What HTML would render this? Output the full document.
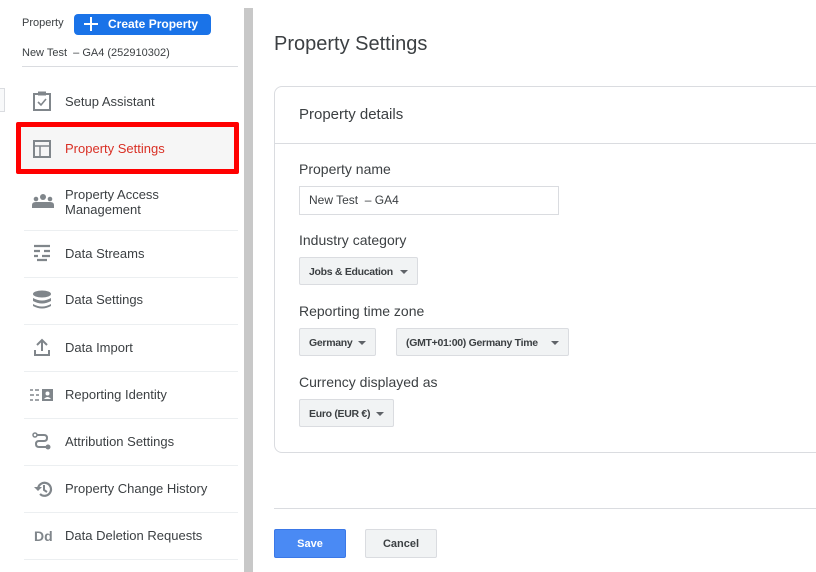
<!DOCTYPE html>
<html><head><style>
*{margin:0;padding:0;box-sizing:border-box}
body{width:816px;height:572px;overflow:hidden;background:#fff;font-family:"Liberation Sans",Arial,sans-serif;position:relative;color:#3c4043}
.a{position:absolute}
.item{position:absolute;left:24px;width:214px;font-size:13px;color:#3c4043}
.div{position:absolute;left:24px;width:214px;height:1px;background:#eceff1}
.ic{position:absolute;left:32px}
.lbl{position:absolute;left:299px;font-size:14px;color:#3c4043}
.dd{position:absolute;height:28px;background:#f1f3f4;border:1px solid #dadce0;border-radius:2px;font-size:10.5px;letter-spacing:-0.3px;font-weight:bold;color:#3c4043;line-height:28px;padding-left:9px}
.dd:after{content:"";position:absolute;right:9px;top:12px;border-left:4px solid transparent;border-right:4px solid transparent;border-top:4px solid #5f6368}
</style></head><body>
<div class="a" style="left:22px;top:17px;font-size:11px;color:#3c4043">Property</div>
<div class="a" style="left:74px;top:14px;width:137px;height:21px;background:#1a73e8;border-radius:4px;color:#fff;font-size:12px;font-weight:bold;line-height:21px;padding-left:34px">Create Property</div>
<div class="a" style="left:84px;top:23px;width:14px;height:2px;background:#fff"></div>
<div class="a" style="left:90px;top:17px;width:2px;height:14px;background:#fff"></div>
<div class="a" style="left:22px;top:47px;font-size:11px;color:#3c4043">New Test &nbsp;– GA4 (252910302)</div>
<div class="a" style="left:22px;top:66px;width:216px;height:1px;background:#dadce0"></div>
<div class="a" style="left:0;top:88px;width:5px;height:24px;border:1px solid #dadce0;border-left:none;background:#f8f9fa"></div>

<svg class="ic" style="top:90px" width="20" height="22" viewBox="0 0 20 22"><rect x="2" y="4" width="16" height="16" fill="none" stroke="#80868b" stroke-width="2"/><rect x="6" y="1.5" width="8" height="4" fill="#80868b"/><path d="M6 12l3 3 5-6" fill="none" stroke="#80868b" stroke-width="1.6"/></svg>
<div class="item" style="top:94px;left:65px">Setup Assistant</div>

<div class="a" style="left:16px;top:122px;width:223px;height:52px;border:5px solid #f00;background:#f6f6f6;border-radius:2px"></div>
<svg class="ic" style="top:139px" width="20" height="20"><rect x="2" y="2" width="16" height="16" fill="none" stroke="#80868b" stroke-width="2"/><path d="M2 7h16M8 7v11" stroke="#80868b" stroke-width="1.5"/></svg>
<div class="item" style="top:141px;left:65px;color:#d93025">Property Settings</div>

<svg class="ic" style="top:193px" width="22" height="16"><circle cx="11" cy="4" r="3" fill="#80868b"/><circle cx="4" cy="6" r="2.3" fill="#80868b"/><circle cx="18" cy="6" r="2.3" fill="#80868b"/><path d="M0 15v-3q0-3 4-3h14q4 0 4 3v3z" fill="#80868b"/></svg>
<div class="item" style="top:187px;left:65px;line-height:15px">Property Access<br>Management</div>
<div class="div" style="top:230px"></div>

<svg class="ic" style="top:244px" width="20" height="18"><path d="M2 2h16M2 7h6M12 7h6M2 12h4M10 12h8M5 16h10" stroke="#80868b" stroke-width="2.2"/></svg>
<div class="item" style="top:246px;left:65px">Data Streams</div>
<div class="div" style="top:277px"></div>

<svg class="ic" style="top:290px" width="20" height="20"><ellipse cx="10" cy="4" rx="9" ry="3.5" fill="#80868b"/><path d="M1 8q9 5 18 0v3q-9 5-18 0zM1 14q9 5 18 0v2q-9 5-18 0z" fill="#80868b"/></svg>
<div class="item" style="top:292px;left:65px">Data Settings</div>
<div class="div" style="top:324px"></div>

<svg class="ic" style="top:337px" width="20" height="20"><path d="M10 14V3M5 8l5-5 5 5M3 13v5h14v-5" fill="none" stroke="#80868b" stroke-width="2"/></svg>
<div class="item" style="top:340px;left:65px">Data Import</div>
<div class="div" style="top:371px"></div>

<svg class="ic" style="top:388px;left:30px" width="24" height="14"><path d="M0 2h3M5 2h4M0 7h4M6 7h3M0 12h3M5 12h4" stroke="#80868b" stroke-width="1.5"/><rect x="12" y="1" width="11" height="12" fill="#80868b"/><circle cx="17.5" cy="5.5" r="2" fill="#fff"/><path d="M14 11q3.5-4 7 0z" fill="#fff"/></svg>
<div class="item" style="top:387px;left:65px">Reporting Identity</div>
<div class="div" style="top:418px"></div>

<svg class="ic" style="top:432px" width="20" height="20"><circle cx="3" cy="3" r="2" fill="none" stroke="#80868b" stroke-width="1.5"/><circle cx="16" cy="15" r="2.5" fill="#80868b"/><path d="M5 3h7q3 0 3 3t-3 3H7q-3 0-3 3t3 3h7" fill="none" stroke="#80868b" stroke-width="2"/></svg>
<div class="item" style="top:434px;left:65px">Attribution Settings</div>
<div class="div" style="top:465px"></div>

<svg class="ic" style="top:479px;left:34px" width="20" height="20"><path d="M4 10a6.5 6.5 0 1 1 2 5" fill="none" stroke="#80868b" stroke-width="2.2"/><path d="M0 8l4 4 4-4z" fill="#80868b"/><path d="M10 6v5l3 2" fill="none" stroke="#80868b" stroke-width="2"/></svg>
<div class="item" style="top:481px;left:65px">Property Change History</div>
<div class="div" style="top:512px"></div>

<div class="a" style="left:34px;top:528px;font-size:14px;font-weight:bold;color:#80868b">Dd</div>
<div class="item" style="top:528px;left:65px">Data Deletion Requests</div>
<div class="div" style="top:559px"></div>

<div class="a" style="left:244px;top:8px;width:9px;height:564px;background:#c8c8c8"></div>

<div class="a" style="left:274px;top:33px;font-size:20px;color:#3c4043">Property Settings</div>
<div class="a" style="left:274px;top:86px;width:560px;height:367px;border:1px solid #dadce0;border-radius:8px"></div>
<div class="a" style="left:275px;top:143px;width:541px;height:1px;background:#dadce0"></div>
<div class="lbl" style="top:106px;font-size:15px">Property details</div>
<div class="lbl" style="top:161px">Property name</div>
<div class="a" style="left:299px;top:186px;width:260px;height:29px;border:1px solid #dadce0;font-size:12px;line-height:27px;padding-left:9px;color:#3c4043">New Test &nbsp;– GA4</div>
<div class="lbl" style="top:232px">Industry category</div>
<div class="dd" style="left:299px;top:257px;width:119px">Jobs &amp; Education</div>
<div class="lbl" style="top:303px">Reporting time zone</div>
<div class="dd" style="left:299px;top:328px;width:77px">Germany</div>
<div class="dd" style="left:396px;top:328px;width:173px">(GMT+01:00) Germany Time</div>
<div class="lbl" style="top:374px">Currency displayed as</div>
<div class="dd" style="left:299px;top:399px;width:95px">Euro (EUR €)</div>

<div class="a" style="left:274px;top:508px;width:542px;height:1px;background:#dadce0"></div>
<div class="a" style="left:274px;top:529px;width:72px;height:29px;background:#4a8af4;border:1px solid #3b78e7;border-radius:2px;color:#fff;font-size:11px;font-weight:bold;text-align:center;line-height:29px">Save</div>
<div class="a" style="left:365px;top:529px;width:72px;height:29px;background:#f1f3f4;border:1px solid #dadce0;border-radius:2px;color:#3c4043;font-size:11px;font-weight:bold;text-align:center;line-height:29px">Cancel</div>
</body></html>
